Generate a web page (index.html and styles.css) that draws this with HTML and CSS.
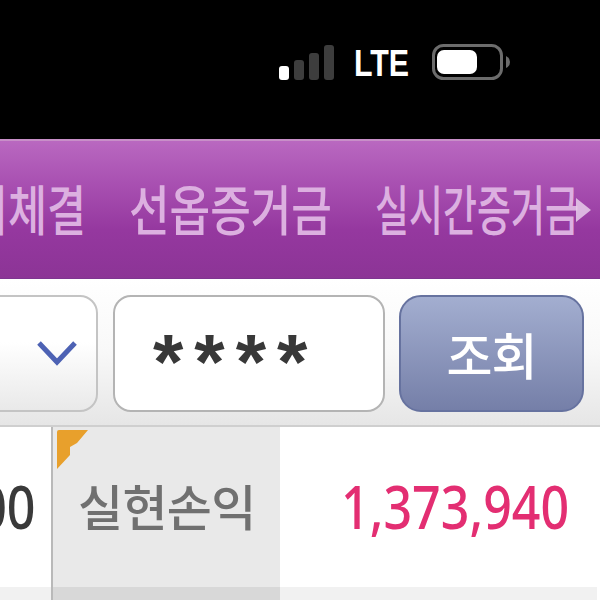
FILE: index.html
```html
<!DOCTYPE html>
<html>
	<head>
		<meta charset="UTF-8">
		<meta name="viewport" content="width=device-width, initial-scale=1.0">
		<link rel="stylesheet" href="styles.css">
	</head>
	<body>
		<div class="screen">
			<div class="statusBar">
				<div class="signal">
					<span class="bar barOn"></span>
					<span class="bar bar2"></span>
					<span class="bar bar3"></span>
					<span class="bar bar4"></span>
				</div>
				<span class="lte">LTE</span>
				<svg class="battery" width="80" height="36" viewBox="0 0 80 36">
					<rect x="1.500" y="1.500" width="68" height="33" rx="10" fill="none" stroke="#6c6c6c" stroke-width="3"/>
					<rect x="5" y="6" width="40" height="24" rx="7" fill="#fff"/>
					<path d="M74 12 Q78 14 78 18 Q78 22 74 24 Z" fill="#6c6c6c"/>
				</svg>
			</div>

			<div class="tabs">
				<span class="tab tabFirst">미체결</span>
				<span class="tab tabSecond">선옵증거금</span>
				<span class="tab tabThird">실시간증거금</span>
				<svg class="tabArrow" width="17" height="26" viewBox="0 0 17 26">
					<path d="M1 1 L16 13 L1 25 Z" fill="#e6cdea" fill-opacity="0.85"/>
				</svg>
			</div>

			<div class="filters">
				<div class="selectBox">
					<svg width="40" height="26" viewBox="0 0 40 26">
						<path d="M2 3 L20 22 L38 3" fill="none" stroke="#4d62b4" stroke-width="5"/>
					</svg>
				</div>
				<div class="passBox">****</div>
				<button class="searchBtn">조회</button>
			</div>

			<div class="row">
				<div class="cell cellValue"><span class="numText numRight">00</span></div>
				<div class="cell cellLabel">
					<svg class="corner" width="31" height="39" viewBox="0 0 31 39">
						<path d="M2 0 H31 L20 13 L13 17 V25 L0 39 V2 Q0 0 2 0 Z" fill="#e8a02c"/>
					</svg>
					실현손익
				</div>
				<div class="cell cellProfit"><span class="numText">1,373,940</span></div>
			</div>

			<div class="rowNext">
				<div class="nextLeft"></div>
				<div class="nextLabel"></div>
				<div class="nextRight"></div>
			</div>
		</div>
	</body>
</html>
```

FILE: styles.css
```css
* {
  margin: 0;
  padding: 0;
  box-sizing: border-box;
}

body {
  background-color: #fff;
  font-family: "Noto Sans CJK KR", "Noto Sans", sans-serif;
}

.screen {
  width: 600px;
  height: 600px;
  overflow: hidden;
}

.statusBar {
  height: 139px;
  background-color: #000;
  display: flex;
  align-items: center;
  padding: 0 0 15px 279px;
}

.signal {
  display: flex;
  align-items: flex-end;
  gap: 5px;
  width: 57px;
  height: 35px;
}

.bar {
  width: 10px;
  border-radius: 3px;
  background-color: #3d3d3d;
}

.barOn {
  height: 14px;
  background-color: #fff;
}

.bar2 {
  height: 20px;
}

.bar3 {
  height: 27px;
}

.bar4 {
  height: 35px;
}

.lte {
  margin: 3px 0 0 18px;
  width: 58px;
  color: #fff;
  font-family: "Liberation Sans", sans-serif;
  font-size: 37px;
  font-weight: bold;
  transform: scaleX(0.82);
  transform-origin: left center;
}

.battery {
  margin-left: 20px;
}

.tabs {
  height: 140px;
  display: flex;
  align-items: center;
  position: relative;
  overflow: hidden;
  padding-bottom: 3px;
  border-top: 2px solid #c88fc8;
  border-bottom: 1px solid #7e3590;
  background: linear-gradient(#b968c0 0%, #a951b2 30%, #95389f 65%, #8c3496 100%);
  color: #dcb0e0;
  white-space: nowrap;
}

.tab {
  display: block;
  flex-shrink: 0;
  font-size: 54px;
  font-weight: 500;
  line-height: 60px;
  transform-origin: left center;
}

.tabFirst {
  width: 160px;
  margin-left: -31px;
  transform: scaleX(0.785);
}

.tabSecond {
  width: 246px;
  transform: scaleX(0.817);
}

.tabThird {
  width: 210px;
  transform: scaleX(0.684);
}

.tabArrow {
  position: absolute;
  right: 8px;
  top: 56px;
}

.filters {
  height: 148px;
  display: flex;
  align-items: center;
  gap: 15px;
  padding-top: 2px;
  border-bottom: 2px solid #cfcfcf;
  background: linear-gradient(#fff 0%, #f8f8f8 50%, #e6e6e6 100%);
}

.selectBox {
  width: 120px;
  height: 117px;
  margin-left: -22px;
  display: flex;
  align-items: center;
  justify-content: flex-end;
  padding-right: 19px;
  border: 2px solid #c4c4c4;
  border-radius: 18px;
  background: linear-gradient(#fff, #fff 40%, #e9e9e9);
}

.passBox {
  width: 272px;
  height: 117px;
  padding-left: 38px;
  border: 2px solid #b4b4b4;
  border-radius: 18px;
  background-color: #fff;
  color: #383838;
  font-family: "Liberation Sans", sans-serif;
  font-size: 78px;
  font-weight: bold;
  line-height: 130px;
  letter-spacing: 11px;
}

.searchBtn {
  width: 185px;
  height: 117px;
  margin-left: -1px;
  border: 2px solid #66729f;
  border-radius: 22px;
  background: linear-gradient(#a3aed0, #757fa8);
  color: #fff;
  font-family: inherit;
  font-size: 50px;
  font-weight: 500;
  letter-spacing: -1px;
}

.row {
  height: 160px;
  display: flex;
}

.cell {
  display: flex;
  align-items: center;
  flex-shrink: 0;
}

.numText {
  display: block;
  font-family: "Noto Sans", sans-serif;
  font-size: 59px;
  font-weight: 500;
  white-space: nowrap;
  transform: scaleX(0.85);
  transform-origin: left center;
}

.numRight {
  transform-origin: right center;
}

.cellValue {
  width: 53px;
  justify-content: flex-end;
  padding: 0 16px 3px 0;
  overflow: hidden;
  border-right: 2px solid #b9b9b9;
  color: #3a3a3a;
}

.cellLabel {
  width: 227px;
  position: relative;
  padding: 0 0 5px 25px;
  background-color: #e9e9e9;
  color: #707070;
  font-size: 49px;
  font-weight: 500;
  letter-spacing: -0.700px;
}

.corner {
  position: absolute;
  left: 4px;
  top: 3px;
}

.cellProfit {
  width: 320px;
  padding: 0 0 3px 61px;
  color: #e32e72;
}

.rowNext {
  height: 13px;
  display: flex;
}

.nextLeft {
  width: 53px;
  border-right: 2px solid #b9b9b9;
  background-color: #f1f1f1;
}

.nextLabel {
  width: 227px;
  background-color: #d8d8d8;
}

.nextRight {
  width: 317px;
  background-color: #f1f1f1;
}
```
